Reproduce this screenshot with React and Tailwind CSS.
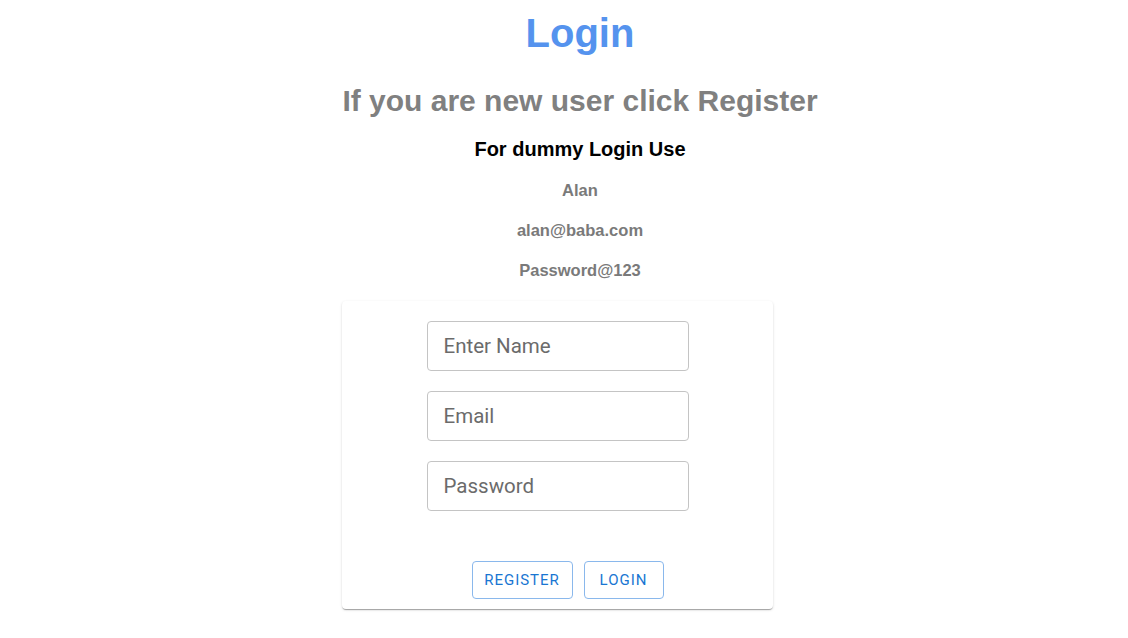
import React from "react";

const fields = ["Enter Name", "Email", "Password"];

export default function App() {
  return (
    <div className="min-h-[638px] bg-white font-['Liberation_Sans',Arial,sans-serif] text-center">
      <div className="pl-[32px]">
        <h1 className="pt-[13px] text-[40px] leading-[40px] font-bold text-[#5593ee]">Login</h1>
        <h2 className="mt-[33px] text-[30px] leading-[30px] font-bold text-[#808080]">If you are new user click Register</h2>
        <h3 className="mt-[23px] text-[20px] leading-[20px] font-bold text-black">For dummy Login Use</h3>
        <div className="mt-[23px] flex flex-col gap-[24px] text-[16.5px] leading-[16px] font-bold text-[#7a7a7a]">
          <p>Alan</p>
          <p>alan@baba.com</p>
          <p>Password@123</p>
        </div>
      </div>

      <div className="pr-[13px]">
        <div className="mx-auto mt-[23px] w-[431px] rounded-[4px] bg-white pt-[20px] pb-[10px] shadow-[0_2px_1px_-1px_rgba(0,0,0,0.2),0_1px_1px_0_rgba(0,0,0,0.14),0_1px_3px_0_rgba(0,0,0,0.12)]">
          <form className="flex flex-col items-center gap-[20px]">
            {fields.map((label) => (
              <input
                key={label}
                placeholder={label}
                type={label === "Password" ? "password" : "text"}
                className="h-[50px] w-[262px] rounded-[4px] border border-[#c4c4c4] px-[16px] font-['Roboto',sans-serif] text-[20.5px] text-black outline-none placeholder:text-[#6b6b6b]"
              />
            ))}
          </form>
          <div className="mt-[50px] flex justify-center gap-[11px] pl-[20px] font-['Roboto',sans-serif]">
            <button className="h-[38px] w-[101px] rounded-[4px] border border-[#8ab8ec] text-[15px] tracking-[1px] text-[#1976d2]">
              REGISTER
            </button>
            <button className="h-[38px] w-[80px] rounded-[4px] border border-[#8ab8ec] text-[15px] tracking-[1px] text-[#1976d2]">
              LOGIN
            </button>
          </div>
        </div>
      </div>
    </div>
  );
}
